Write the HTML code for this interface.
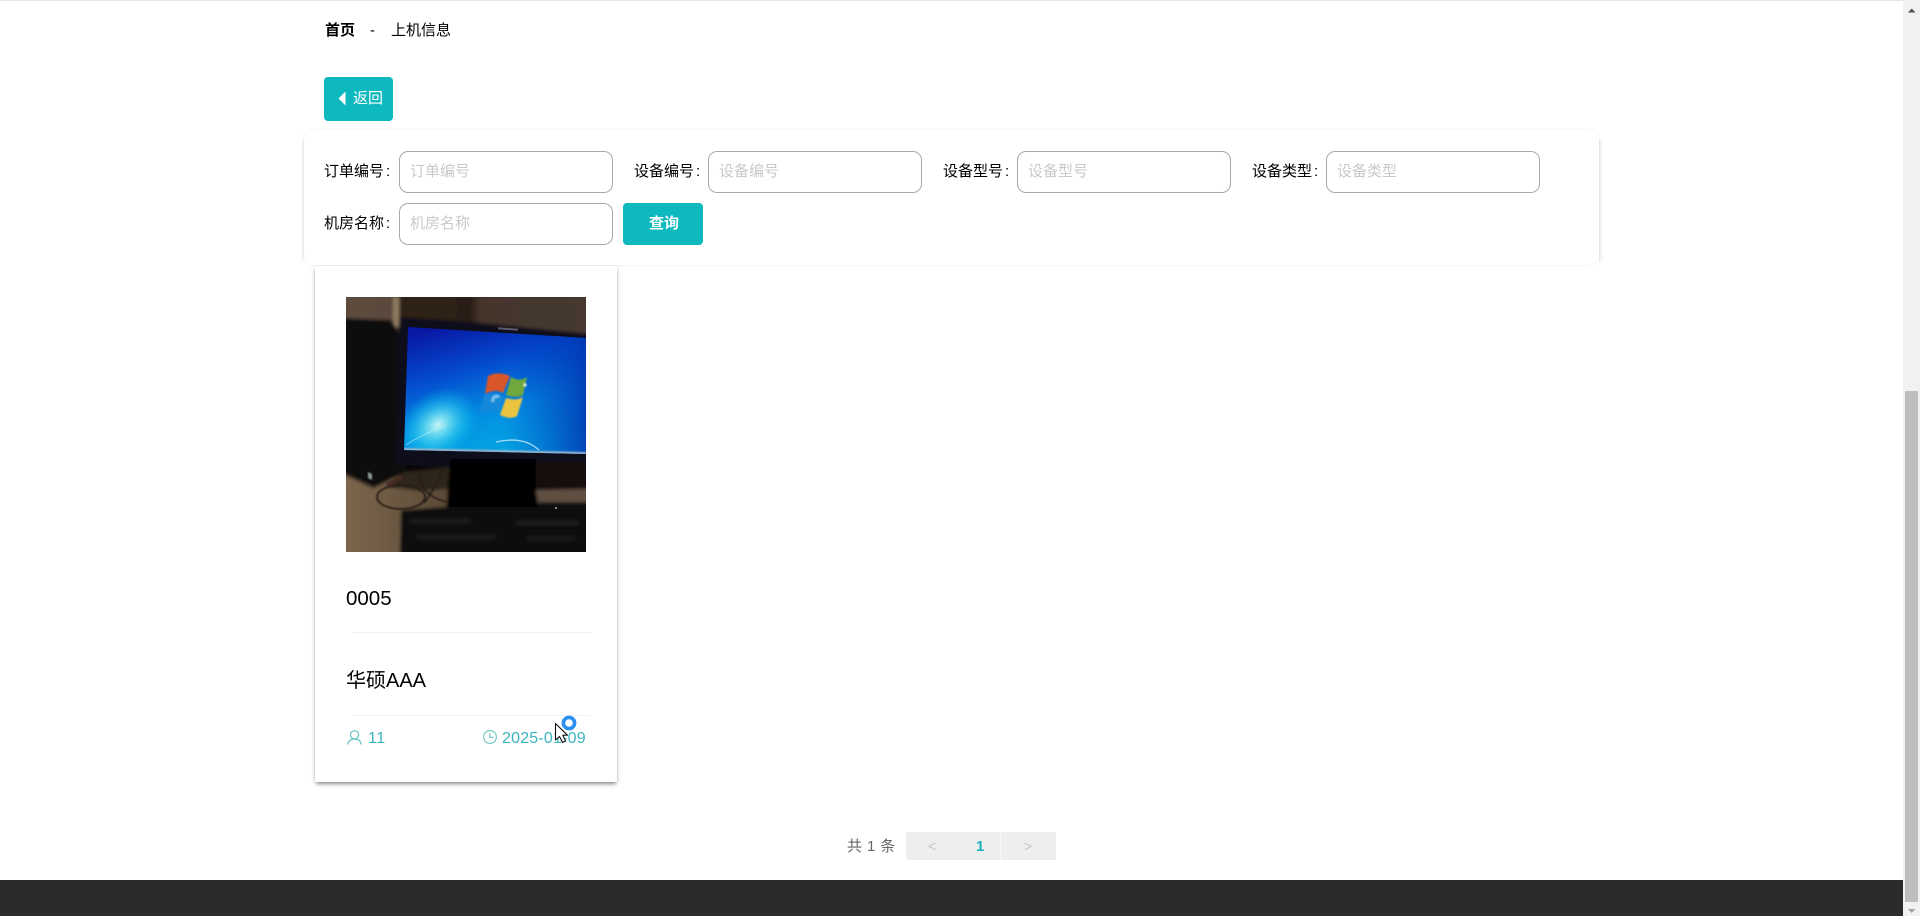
<!DOCTYPE html>
<html lang="zh-CN">
<head>
<meta charset="utf-8">
<title>上机信息</title>
<style>
html,body{margin:0;padding:0;width:1920px;height:916px;overflow:hidden;background:#fff;}
body{position:relative;font-family:"Liberation Sans","Noto Sans CJK SC",sans-serif;color:#000;}
.a{position:absolute;white-space:nowrap;}
.t{font-size:15px;line-height:20px;height:20px;}
.t i{font-style:normal;margin-left:2px;}
.inp{position:absolute;box-sizing:border-box;width:214px;height:42px;border:1px solid #a9a9a9;border-radius:9px;background:#fff;color:#c9c9c9;font-size:15px;line-height:40px;padding-left:10px;white-space:nowrap;}
.panel{position:absolute;left:304px;top:130px;width:1295px;height:135px;background:#fff;border-radius:10px;box-shadow:0 0 2px rgba(0,0,0,.1);}
.card{position:absolute;left:315px;top:266px;width:302px;height:516px;background:#fff;box-shadow:0 3px 4px -1px rgba(0,0,0,.42),0 0 4px rgba(0,0,0,.12);}
.btn{position:absolute;background:#0db8bf;border-radius:4px;color:#fff;}
</style>
</head>
<body>
<div class="a" style="left:0;top:0;width:1903px;height:1px;background:#e6e6e6"></div>

<div class="a t" style="left:325px;top:21px;font-weight:700">首页</div>
<div class="a t" style="left:370px;top:21px">-</div>
<div class="a t" style="left:391px;top:21px">上机信息</div>

<div class="btn" style="left:324px;top:77px;width:69px;height:44px"></div>
<svg class="a" style="left:337px;top:90px" width="10" height="17" viewBox="0 0 10 17"><path d="M8.5 1.5V15.5L1.5 8.5Z" fill="#fff"/></svg>
<div class="a t" style="left:353px;top:89px;color:#fff">返回</div>

<div class="card"></div>
<div class="a" style="left:300px;top:140px;width:4px;height:122px;background:linear-gradient(to left,rgba(0,0,0,.05),rgba(0,0,0,0))"></div>
<div class="a" style="left:1599px;top:140px;width:4px;height:122px;background:linear-gradient(to right,rgba(0,0,0,.08),rgba(0,0,0,0))"></div>
<div class="panel"></div>

<div class="a t" style="left:324px;top:162px">订单编号<i>:</i></div>
<div class="inp" style="left:399px;top:151px">订单编号</div>
<div class="a t" style="left:634px;top:162px">设备编号<i>:</i></div>
<div class="inp" style="left:708px;top:151px">设备编号</div>
<div class="a t" style="left:943px;top:162px">设备型号<i>:</i></div>
<div class="inp" style="left:1017px;top:151px">设备型号</div>
<div class="a t" style="left:1252px;top:162px">设备类型<i>:</i></div>
<div class="inp" style="left:1326px;top:151px">设备类型</div>
<div class="a t" style="left:324px;top:214px">机房名称<i>:</i></div>
<div class="inp" style="left:399px;top:203px">机房名称</div>
<div class="btn" style="left:623px;top:203px;width:80px;height:42px"></div>
<div class="a t" style="left:649px;top:214px;color:#fff;font-weight:700;width:30px">查询</div>

<svg class="a" style="left:346px;top:297px" width="240" height="255" viewBox="0 0 240 255">
<defs>
<filter id="b" x="-5%" y="-5%" width="110%" height="110%"><feGaussianBlur stdDeviation="1.6"/></filter>
<filter id="b3" x="-20%" y="-20%" width="140%" height="140%"><feGaussianBlur stdDeviation=".9"/></filter>
<filter id="b4" x="-20%" y="-20%" width="140%" height="140%"><feGaussianBlur stdDeviation="2"/></filter>
<linearGradient id="wall" x1="0" x2="1" y1="0" y2="0">
<stop offset="0" stop-color="#5e4c3e"/><stop offset=".2" stop-color="#5c4a3c"/><stop offset=".24" stop-color="#2f2219"/><stop offset=".52" stop-color="#2c1f17"/><stop offset=".56" stop-color="#44362c"/><stop offset="1" stop-color="#463830"/>
</linearGradient>
<linearGradient id="scr" x1=".3" x2=".7" y1="0" y2="1">
<stop offset="0" stop-color="#0818a4"/><stop offset=".32" stop-color="#044ace"/><stop offset=".65" stop-color="#0390e2"/><stop offset="1" stop-color="#05aae2"/>
</linearGradient>
<linearGradient id="scr2" x1="0" x2="1" y1="0" y2="0">
<stop offset=".55" stop-color="#0040c8" stop-opacity="0"/><stop offset="1" stop-color="#0034b0" stop-opacity=".9"/>
</linearGradient>
<radialGradient id="glow" cx=".5" cy=".5" r=".5">
<stop offset="0" stop-color="#c8f4f4"/><stop offset=".25" stop-color="#7ce6f2" stop-opacity=".85"/><stop offset=".65" stop-color="#20ccf0" stop-opacity=".45"/><stop offset="1" stop-color="#00b0e8" stop-opacity="0"/>
</radialGradient>
<linearGradient id="desk" x1="0" x2="1" y1="0" y2="0">
<stop offset="0" stop-color="#7d674d"/><stop offset="1" stop-color="#5a4937"/>
</linearGradient>
<clipPath id="sc"><path d="M62 30 240 41V157L58 153Z"/></clipPath>
</defs>
<rect width="240" height="255" fill="#0b0808"/>
<g filter="url(#b)">
<rect x="-4" y="-2" width="248" height="60" fill="url(#wall)"/>
<rect x="47" y="0" width="6" height="30" fill="#8f7c60"/>
<path d="M-4 21 46 23 54 40 60 176 32 192 -4 174Z" fill="#100a0a"/>
<path d="M53 20 125 25 244 37V172L50 168Z" fill="#090a1a"/>
<path d="M-4 176 28 191 60 175 104 170V212L55 213 54 260H-4Z" fill="url(#desk)"/>
<path d="M58 175 104 170V192L76 194 40 190Z" fill="#2e251e"/>
<path d="M104 162H190L192 214H100Z" fill="#040306"/>
<path d="M190 165H244V193L190 193Z" fill="#141110"/>
<path d="M190 193 244 192V206L192 206Z" fill="#5e5043"/>
<path d="M55 213 100 210H244V260H54Z" fill="#0a0708"/>
</g>
<g fill="none" stroke="#261c16" stroke-width="1.7" filter="url(#b3)">
<ellipse cx="55" cy="200" rx="24" ry="12"/>
<path d="M78 206C86 195 93 185 98 170"/>
<path d="M75 175C72 190 82 200 100 205"/>
</g>
<path d="M22 175 26 177 26 183 22 181Z" fill="#8f9a94" filter="url(#b3)"/>
<path d="M40 186 56 178 56 182 42 190Z" fill="#4a2a24" filter="url(#b3)"/>
<g clip-path="url(#sc)">
<rect x="50" y="25" width="195" height="135" fill="url(#scr)"/>
<rect x="50" y="25" width="195" height="135" fill="url(#scr2)"/>
<ellipse cx="92" cy="128" rx="44" ry="34" fill="url(#glow)" transform="rotate(-35 92 128)"/>
<path d="M58 151 240 155V160H58Z" fill="#94b4cc" filter="url(#b3)"/>
<path d="M60 148C75 138 85 135 100 128" fill="none" stroke="#bff2f8" stroke-width="1" opacity=".6"/>
<path d="M150 145C168 141 182 143 193 153" fill="none" stroke="#cfeff6" stroke-width="1.3" opacity=".8"/>
</g>
<g filter="url(#b3)">
<path d="M142 79C149 75 157 76 164 79L157 96C152 93 146 93 139 97Z" fill="#d8562c"/>
<path d="M165 80C171 84 177 83 181 80L177 98C171 101 166 100 160 98Z" fill="#6fa83c"/>
<path d="M138 99C145 95 151 96 158 100L152 116C146 112 140 113 133 117Z" fill="#1688da"/>
<path d="M160 101C167 103 172 103 177 100L171 119C166 122 160 121 154 118Z" fill="#ebc440"/>
<path d="M147 105C146 100 150 98 153 100" fill="none" stroke="#c4f2fb" stroke-width="3" opacity=".55"/>
<circle cx="179" cy="88" r="1.6" fill="#e8f4d0"/>
</g>
<rect x="152" y="31" width="20" height="2" fill="#6d7080" opacity=".8" transform="rotate(4 162 32)"/>
<g fill="#242424" filter="url(#b4)">
<rect x="64" y="222" width="60" height="4"/><rect x="70" y="238" width="80" height="4"/><rect x="170" y="224" width="62" height="4"/><rect x="180" y="240" width="50" height="3"/>
</g>
<circle cx="210" cy="211" r="1" fill="#a8a8a8"/>
</svg>

<div class="a" style="left:346px;top:587px;font-size:20.5px;line-height:24px">0005</div>
<div class="a" style="left:352px;top:632px;width:240px;height:1px;background:#f2f2f2"></div>
<div class="a" style="left:346px;top:667px;font-size:20px;line-height:28px">华硕AAA</div>
<div class="a" style="left:352px;top:715px;width:238px;height:1px;background:#f2f2f2"></div>

<svg class="a" style="left:346px;top:729px" width="17" height="17" viewBox="0 0 17 17" fill="none" stroke="#66c3c5" stroke-width="1.2"><circle cx="8.5" cy="5.8" r="4.1"/><path d="M1.6 15.5C2.4 11.8 5 10 8.5 10S14.6 11.8 15.4 15.5"/></svg>
<div class="a" style="left:368px;top:729px;font-size:16px;line-height:20px;color:#3cb4c0;letter-spacing:.5px">11</div>
<svg class="a" style="left:482px;top:729px" width="16" height="16" viewBox="0 0 16 16" fill="none" stroke="#7accc8" stroke-width="1.2"><circle cx="8" cy="8" r="6.4"/><path d="M8 4.2V8.4H11.6"/></svg>
<div class="a" style="left:502px;top:729px;font-size:16px;line-height:20px;color:#3cb4c0;letter-spacing:.2px">2025-01-09</div>

<svg class="a" style="left:552px;top:714px" width="28" height="32" viewBox="0 0 28 32">
<path d="M3.5 9.5V26L7.5 22.5 10.5 28.5 13.5 27 10.8 21.2H15.5Z" fill="#fff" stroke="#111" stroke-width="1.1" stroke-linejoin="round"/>
<circle cx="17" cy="9" r="5.6" fill="none" stroke="#2a90f0" stroke-width="3.6"/>
</svg>

<div class="a" style="left:847px;top:837px;font-size:15px;line-height:20px;color:#666;letter-spacing:.4px">共 1 条</div>
<div class="a" style="left:906px;top:832px;width:150px;height:28px;background:#eee;border-radius:3px 0 0 3px"></div>
<div class="a" style="left:1000px;top:832px;width:1px;height:28px;background:#f6f6f6"></div>
<div class="a" style="left:928px;top:836px;font-size:14px;line-height:20px;color:#c4c4c4">&lt;</div>
<div class="a" style="left:976px;top:837px;font-size:15px;line-height:20px;font-weight:700;color:#17b0b8">1</div>
<div class="a" style="left:1024px;top:836px;font-size:14px;line-height:20px;color:#c4c4c4">&gt;</div>

<div class="a" style="left:0;top:880px;width:1903px;height:36px;background:#2b2b2b"></div>

<div class="a" style="left:1903px;top:0;width:17px;height:916px;background:#f1f1f1"></div>
<div class="a" style="left:1905px;top:391px;width:13px;height:511px;background:#bebebe"></div>
<svg class="a" style="left:1903px;top:0" width="17" height="17" viewBox="0 0 17 17"><path d="M5 12.5H12.5L8.7 8.5Z" fill="#505050"/></svg>
<svg class="a" style="left:1903px;top:899px" width="17" height="17" viewBox="0 0 17 17"><path d="M5 10H12.5L8.7 14Z" fill="#a3a3a3"/></svg>
</body>
</html>
